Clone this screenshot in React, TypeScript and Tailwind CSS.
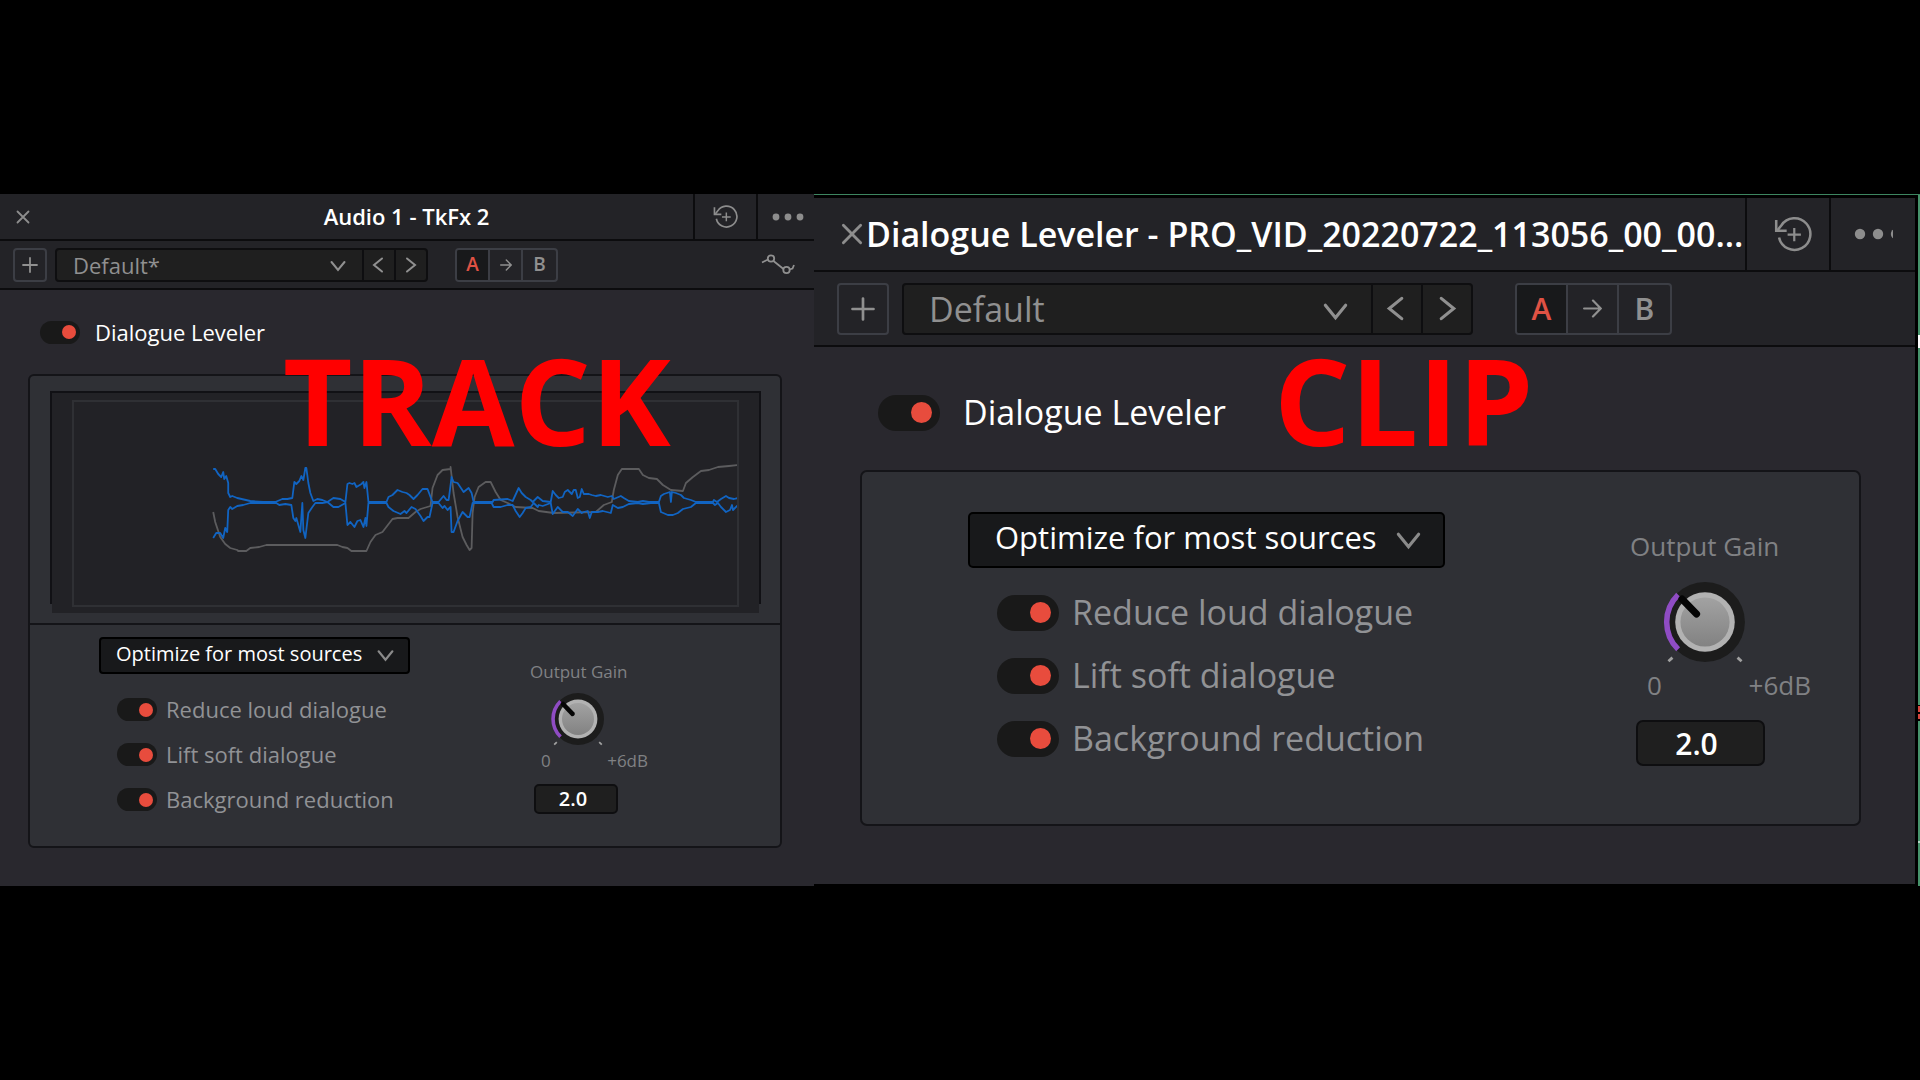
import { useId, useState } from 'react';
import { clsx } from 'clsx';

type Size = 'sm' | 'lg';

const OPTIONS = ['Reduce loud dialogue', 'Lift soft dialogue', 'Background reduction'];

const LEVEL_TOP =
  '213,469 215,469 218,474 221,477 223,472 224,479 226,476 228,483 228,493 230,497 232,496 237,498 250,501 263,502 275,502 282,499 287,499 292,498 294,482 296,484 299,481 301,476 303,480 305,468 306,468 308,483 310,493 313,501 317,499 322,500 327,502 333,498 340,499 345,502 347,484 349,483 352,484 354,483 356,487 361,484 363,482 364,488 366,482 368,502 386,502 388,497 392,495 397,490 402,492 406,493 409,495 413,499 417,495 422,489 427,489 430,497 432,502 438,502 443,496 446,500 448,500 449,493 451,477 453,482 457,483 463,492 468,488 471,493 473,502 492,502 493,500 507,499 512,501 518,488 521,493 525,497 530,500 532,502 537,497 542,501 550,502 552,491 555,495 558,498 562,497 564,492 567,490 571,494 573,490 575,490 577,498 579,497 581,489 583,494 588,494 591,495 595,496 600,495 607,497 611,496 613,499 620,496 623,498 628,501 637,502 642,501 648,502 658,502 660,496 663,494 669,492 670,502 671,492 675,493 680,495 683,498 690,500 695,502 712,502 713,500 716,502 720,499 725,496 728,498 733,499 737,498';

const LEVEL_BOTTOM =
  '213,538 216,533 220,533 223,538 225,528 227,532 228,510 230,507 232,509 237,506 243,505 250,503 263,503 276,503 279,505 285,504 291,505 293,518 295,521 296,518 298,525 300,532 302,503 303,530 305,538 308,513 312,507 315,503 322,503 327,502 333,507 338,507 345,503 347,525 350,522 354,527 357,521 360,520 363,527 365,518 366,526 368,503 386,503 388,507 393,511 400,514 404,511 406,513 411,507 415,509 420,516 423,521 427,517 429,517 432,503 438,503 442,508 444,506 447,510 450,507 451,532 453,532 457,521 462,512 467,517 469,517 472,503 491,503 493,507 500,507 507,505 512,505 515,511 519,517 522,513 525,508 530,507 533,503 537,507 538,505 542,506 550,503 552,514 557,507 562,512 567,512 572,516 577,509 581,513 583,512 587,511 589,518 591,512 597,512 602,511 610,513 612,505 617,508 622,507 628,504 637,503 642,504 650,503 658,503 660,512 667,515 672,515 677,513 682,509 690,507 695,503 712,503 714,505 717,503 720,507 725,512 729,510 731,505 732,510 737,505';

const GAIN_CURVE =
  '213,512 215,522 220,537 225,544 230,548 237,550 238,551 246,551 250,548 259,547 266,545 337,545 342,547 347,548 351,551 366,551 370,542 375,535 382,532 392,519 397,518 408,518 415,512 420,509 430,506 432,488 437,475 442,470 450,469 450,467 453,493 457,517 462,537 466,545 469,550 471,548 472,513 474,497 478,487 485,482 490,482 495,492 500,500 507,503 515,507 532,508 538,511 553,513 595,512 603,505 611,502 613,490 617,475 621,469 638,469 642,475 648,478 656,479 662,485 670,490 682,491 685,483 692,477 700,471 708,470 717,467 728,466 737,465';

function CloseIcon({ className }: { className: string }) {
  return (
    <svg viewBox="0 0 14 14" className={className} fill="none" stroke="currentColor" strokeWidth="1.8" strokeLinecap="round">
      <path d="M1.5 1.5l11 11M12.5 1.5l-11 11" />
    </svg>
  );
}

function PlusIcon({ className }: { className: string }) {
  return (
    <svg viewBox="0 0 16 16" className={className} fill="none" stroke="currentColor" strokeWidth="1.8" strokeLinecap="round">
      <path d="M8 1v14M1 8h14" />
    </svg>
  );
}

function Chevron({ className, dir = 'down' }: { className: string; dir?: 'down' | 'left' | 'right' }) {
  const paths = {
    down: 'M1.5 4l6.5 8 6.5-8',
    left: 'M12 1.5L4 8l8 6.5',
    right: 'M4 1.5L12 8l-8 6.5',
  };
  return (
    <svg viewBox="0 0 16 16" className={className} fill="none" stroke="currentColor" strokeWidth="2" strokeLinecap="round">
      <path d={paths[dir]} />
    </svg>
  );
}

function ArrowIcon({ className }: { className: string }) {
  return (
    <svg viewBox="0 0 12 12" className={className} fill="none" stroke="currentColor" strokeWidth="1.4" strokeLinecap="round">
      <path d="M0.7 6h10.4M6.3 1l4.9 5-4.9 5" />
    </svg>
  );
}

function HistoryIcon({ className }: { className: string }) {
  return (
    <svg viewBox="0 0 24 24" className={className} fill="none" stroke="currentColor" strokeWidth="1.6">
      <path d="M3.2 14.2A10 10 0 1 0 4.6 6.6L2.2 9.6" />
      <path d="M1.4 3.2V10h6.6" />
      <path d="M12.8 8.2v8.4M8.6 12.4H17" strokeWidth="1.4" />
    </svg>
  );
}

function CurveIcon() {
  return (
    <svg viewBox="0 0 34 22" className="h-[22px] w-[34px]" fill="none" stroke="currentColor" strokeWidth="1.8">
      <path d="M1 8.5l6-3M12.5 7l10 8M28.5 15.5l3-1 1.5-3.5" />
      <circle cx="10" cy="4.5" r="3.2" />
      <circle cx="25.5" cy="16" r="3.2" />
    </svg>
  );
}

function Toggle({ size, label, className }: { size: Size; label: string; className: string }) {
  const id = useId();
  const sm = size === 'sm';
  return (
    <div className={clsx('flex items-center', className)}>
      <input
        id={id}
        type="checkbox"
        defaultChecked
        className={clsx(
          'flex shrink-0 appearance-none items-center rounded-full bg-[#191919] before:rounded-full before:bg-[#777] checked:justify-end checked:before:bg-[#e84c3d]',
          sm ? 'h-[23px] w-[40px] px-[4px] before:size-[14px]' : 'h-[36px] w-[62px] px-[8px] before:size-[21px]',
        )}
      />
      <label htmlFor={id} className="whitespace-nowrap">
        {label}
      </label>
    </div>
  );
}

function Knob({ size }: { size: Size }) {
  const [gain, setGain] = useState('2.0');
  const id = useId();
  const sm = size === 'sm';
  return (
    <div className={clsx('flex flex-col items-start text-[#808184]', sm ? 'mr-[132px] pt-[35px]' : 'mr-[48px] pt-[56px]')}>
      <label htmlFor={id} className={sm ? 'text-[17px] leading-[24px]' : 'text-[26px] leading-[36px]'}>
        Output Gain
      </label>
      <div className={clsx('relative', sm ? 'mt-[7px] ml-[20px] size-[56px]' : 'mt-[15px] ml-[32px] size-[86px]')}>
        <svg viewBox="0 0 56 56" className="size-full">
          <defs>
            <linearGradient id={`face-${size}`} x1="0" y1="0" x2="0" y2="1">
              <stop offset="0" stopColor="#a2a2a2" />
              <stop offset="1" stopColor="#828282" />
            </linearGradient>
          </defs>
          <circle cx="28" cy="28" r="26" fill="#1c1c1c" />
          <circle cx="28" cy="28" r="19.4" fill="#b2b2b2" />
          <circle cx="28" cy="28" r="16" fill={`url(#face-${size})`} />
          <path d="M10.5 45.8A25 25 0 0 1 10.5 10.2" fill="none" stroke="#8f4cc4" strokeWidth="3.6" />
          <path d="M13 13L22.5 22.8" stroke="#050505" strokeWidth="4.6" strokeLinecap="round" />
          <path d="M4.2 53.6l2.6-2.4M49.2 51.2l2.6 2.4" stroke="#a0a0a0" strokeWidth="1.8" />
        </svg>
        <input
          type="range"
          aria-label="Output Gain"
          min="0"
          max="6"
          step="0.1"
          value={Number(gain) || 0}
          onChange={e => setGain(Number(e.target.value).toFixed(1))}
          className="absolute inset-0 size-full cursor-pointer opacity-0"
        />
      </div>
      <div
        className={clsx(
          'flex justify-between',
          sm ? 'mt-[4px] ml-[11px] w-[107px] text-[17px] leading-[20px]' : 'mt-[5px] ml-[17px] w-[164px] text-[26px] leading-[30px]',
        )}
      >
        <span>0</span>
        <span>+6dB</span>
      </div>
      <input
        id={id}
        type="text"
        value={gain}
        onChange={e => setGain(e.target.value)}
        className={clsx(
          'border-2 border-[#0e0e10] bg-[#1f1f1f] text-center font-semibold text-white',
          sm ? 'mt-[13px] ml-[4px] h-[30px] w-[84px] rounded-[5px] pr-[6px] text-[20px]' : 'mt-[20px] ml-[6px] h-[46px] w-[129px] rounded-[7px] pr-[8px] text-[30px]',
        )}
      />
    </div>
  );
}

function Controls({ size }: { size: Size }) {
  const sm = size === 'sm';
  return (
    <div className="flex justify-between">
      <div className={sm ? 'pt-[12px] pb-[24px] pl-[69px]' : 'pt-[40px] pb-[54px] pl-[106px]'}>
        <div className="relative">
          <select
            aria-label="Optimize"
            className={clsx(
              'block appearance-none border-2 border-black bg-[#18191b] text-white',
              sm ? 'h-[37px] w-[311px] rounded-[4px] pb-[4px] pl-[15px] text-[20px]' : 'h-[56px] w-[477px] rounded-[5px] pb-[8px] pl-[25px] text-[31px]',
            )}
          >
            <option>Optimize for most sources</option>
          </select>
          <Chevron
            className={clsx(
              'pointer-events-none absolute text-[#8a8a8a]',
              sm ? 'top-[10px] left-[278px] size-[17px]' : 'top-[16px] left-[428px] size-[25px]',
            )}
          />
        </div>
        <div className={sm ? 'mt-[13px] ml-[18px] text-[22px]' : 'mt-[13px] ml-[29px] text-[34px]'}>
          {OPTIONS.map(label => (
            <Toggle
              key={label}
              size={size}
              label={label}
              className={clsx('text-[#919295]', sm ? 'h-[45px] gap-[9px]' : 'h-[63px] gap-[13px]')}
            />
          ))}
        </div>
      </div>
      <Knob size={size} />
    </div>
  );
}

function Toolbar({ size, preset }: { size: Size; preset: string }) {
  const sm = size === 'sm';
  const step = clsx('flex items-center justify-center border-l-2 border-[#0e0e10]', sm ? 'w-[32px]' : 'w-[50px]');
  const cell = clsx('flex items-center justify-center', sm ? 'w-[33px]' : 'w-[51px]');
  return (
    <div
      className={clsx(
        'flex items-center border-b-2 border-[#0c0c0e] bg-[#232327] text-[#909090]',
        sm ? 'h-[49px] pr-[19px] pl-[13px]' : 'h-[75px] pl-[23px]',
      )}
    >
      <button
        aria-label="Add preset"
        className={clsx('flex items-center justify-center rounded-[4px] border-2 border-[#3c3e45]', sm ? 'size-[34px]' : 'size-[52px]')}
      >
        <PlusIcon className={sm ? 'size-[16px]' : 'size-[24px]'} />
      </button>
      <div
        className={clsx(
          'flex rounded-[4px] border-2 border-[#0e0e10] bg-[#1f1f1f]',
          sm ? 'ml-[8px] h-[34px] w-[373px]' : 'ml-[13px] h-[52px] w-[571px]',
        )}
      >
        <div className="relative flex flex-1">
          <select
            aria-label="Preset"
            className={clsx('w-full appearance-none', sm ? 'pl-[16px] text-[22px] leading-[30px]' : 'pl-[25px] text-[34px] leading-[48px]')}
          >
            <option>{preset}</option>
          </select>
          <Chevron
            className={clsx('pointer-events-none absolute', sm ? 'top-[8px] right-[16px] size-[16px]' : 'top-[14px] right-[23px] size-[25px]')}
          />
        </div>
        <button aria-label="Previous preset" className={clsx(step, sm ? 'pr-[2px]' : 'pr-[3px]')}>
          <Chevron dir="left" className={sm ? 'size-[16px]' : 'size-[25px]'} />
        </button>
        <button aria-label="Next preset" className={step}>
          <Chevron dir="right" className={sm ? 'size-[16px]' : 'size-[25px]'} />
        </button>
      </div>
      <div
        className={clsx(
          'flex divide-x-2 divide-[#3c3e45] overflow-hidden rounded-[4px] border-2 border-[#3c3e45] font-semibold',
          sm ? 'ml-[27px] h-[34px] text-[19px]' : 'ml-[42px] h-[52px] text-[30px]',
        )}
      >
        <button className={clsx(cell, 'bg-[#18191b] text-[#e05244]')}>A</button>
        <button aria-label="Copy A to B" className={cell}>
          <ArrowIcon className={sm ? 'size-[12px]' : 'size-[19px]'} />
        </button>
        <button className={cell}>B</button>
      </div>
      {sm && (
        <button aria-label="Automation curve" className="ml-auto">
          <CurveIcon />
        </button>
      )}
    </div>
  );
}

function LevelGraph() {
  return (
    <div className="border-b-2 border-[#141418] pt-[15px] pr-[19px] pb-[10px] pl-[20px]">
      <div className="h-[213px] border-x-2 border-t-2 border-[#111115] bg-[#222226] px-[20px] pt-[7px]">
        {/* relative keeps the frame's bottom edge above the strip below */}
        <svg
          viewBox="74 402 662 203"
          preserveAspectRatio="none"
          className="relative h-[207px] w-full border-2 border-[#2f3034]"
          fill="none"
          strokeWidth="1.8"
          strokeLinejoin="round"
        >
          <polyline points={GAIN_CURVE} stroke="#5c5c5e" />
          <polyline points={LEVEL_TOP} stroke="#1164c2" />
          <polyline points={LEVEL_BOTTOM} stroke="#1164c2" />
        </svg>
      </div>
      <div className="mx-[2px] h-[9px] bg-[#222226]" />
    </div>
  );
}

function TrackPanel() {
  return (
    <section className="relative flex flex-col bg-[#29282e]">
      <header className="flex h-[47px] border-b-2 border-[#0c0c0e] bg-[#232327] text-[#8d8d8d]">
        <button aria-label="Close" className="w-[120px] pl-[16px]">
          <CloseIcon className="size-[14px]" />
        </button>
        <h1 className="flex-1 text-center text-[22px] leading-[44px] font-semibold whitespace-nowrap text-white">Audio 1 - TkFx 2</h1>
        <button aria-label="Reset" className="flex w-[63px] items-center justify-center border-l-2 border-[#0c0c0e]">
          <HistoryIcon className="size-[25px]" />
        </button>
        <button aria-label="More" className="flex w-[58px] items-center border-l-2 border-[#0c0c0e] pl-[14px]">
          <svg viewBox="0 0 32 8" className="h-[8px] w-[32px]" fill="currentColor">
            <circle cx="4" cy="4" r="3.4" />
            <circle cx="16" cy="4" r="3.4" />
            <circle cx="28" cy="4" r="3.4" />
          </svg>
        </button>
      </header>
      <Toolbar size="sm" preset="Default*" />
      <Toggle size="sm" label="Dialogue Leveler" className="h-[84px] gap-[15px] pl-[40px] text-[22px] text-white" />
      <div className="mr-[32px] mb-[38px] ml-[28px] rounded-[6px] border-2 border-[#141418] bg-[#2f3035]">
        <LevelGraph />
        <Controls size="sm" />
      </div>
      <p className="pointer-events-none absolute top-[124px] left-[283px] text-[120px] leading-[164px] font-bold text-[#ff0000]">TRACK</p>
    </section>
  );
}

function ClipPanel() {
  return (
    <section className="relative flex border-t border-[#3d8560]">
      <div className="flex min-w-0 flex-1 flex-col border-t-3 border-r-3 border-b-2 border-black bg-[#29282e]">
        <header className="flex h-[74px] border-b-2 border-[#0c0c0e] bg-[#232327] text-[#8d8d8d]">
          <button aria-label="Close" className="pl-[27px]">
            <CloseIcon className="size-[22px]" />
          </button>
          <h1 className="flex-1 overflow-hidden pl-[3px] text-[34px] leading-[72px] font-semibold whitespace-nowrap text-white">
            Dialogue Leveler - PRO_VID_20220722_113056_00_00...
          </h1>
          <button aria-label="Reset" className="flex w-[84px] items-center justify-center border-l-2 border-[#0c0c0e] pl-[9px]">
            <HistoryIcon className="size-[38px]" />
          </button>
          <button aria-label="More" className="flex w-[86px] items-center border-l-2 border-[#0c0c0e] pl-[23px]">
            <svg viewBox="0 0 39 12" className="h-[12px] w-[39px]" fill="currentColor">
              <circle cx="6" cy="6" r="5.2" />
              <circle cx="24" cy="6" r="5.2" />
              <circle cx="42" cy="6" r="5.2" />
            </svg>
          </button>
        </header>
        <Toolbar size="lg" preset="Default" />
        <Toggle size="lg" label="Dialogue Leveler" className="h-[123px] gap-[23px] pt-[8px] pl-[64px] text-[34px] text-white" />
        <div className="mr-[54px] ml-[46px] rounded-[7px] border-2 border-[#141418] bg-[#2f3035]">
          <Controls size="lg" />
        </div>
      </div>
      {/* sliver of the timeline behind the window */}
      <div className="flex w-[2px] flex-col bg-[#46936b]">
        <div className="mt-[140px] h-[13px] bg-white" />
        <div className="mt-[357px] h-[7px] border-t border-black bg-[#d9483f]" />
        <div className="h-[9px] border-y-2 border-black bg-[#d9483f]" />
        <div className="mt-[120px] h-[2px] bg-[#b5d6c4]" />
      </div>
      <p className="pointer-events-none absolute top-[123px] left-[460px] text-[120px] leading-[164px] font-bold text-[#ff0000]">CLIP</p>
    </section>
  );
}

export default function App() {
  return (
    <main className="flex min-h-screen items-center bg-black font-['Open_Sans','Noto_Sans',sans-serif]">
      <div className="grid w-full grid-cols-[814fr_1106fr]">
        <TrackPanel />
        <ClipPanel />
      </div>
    </main>
  );
}
